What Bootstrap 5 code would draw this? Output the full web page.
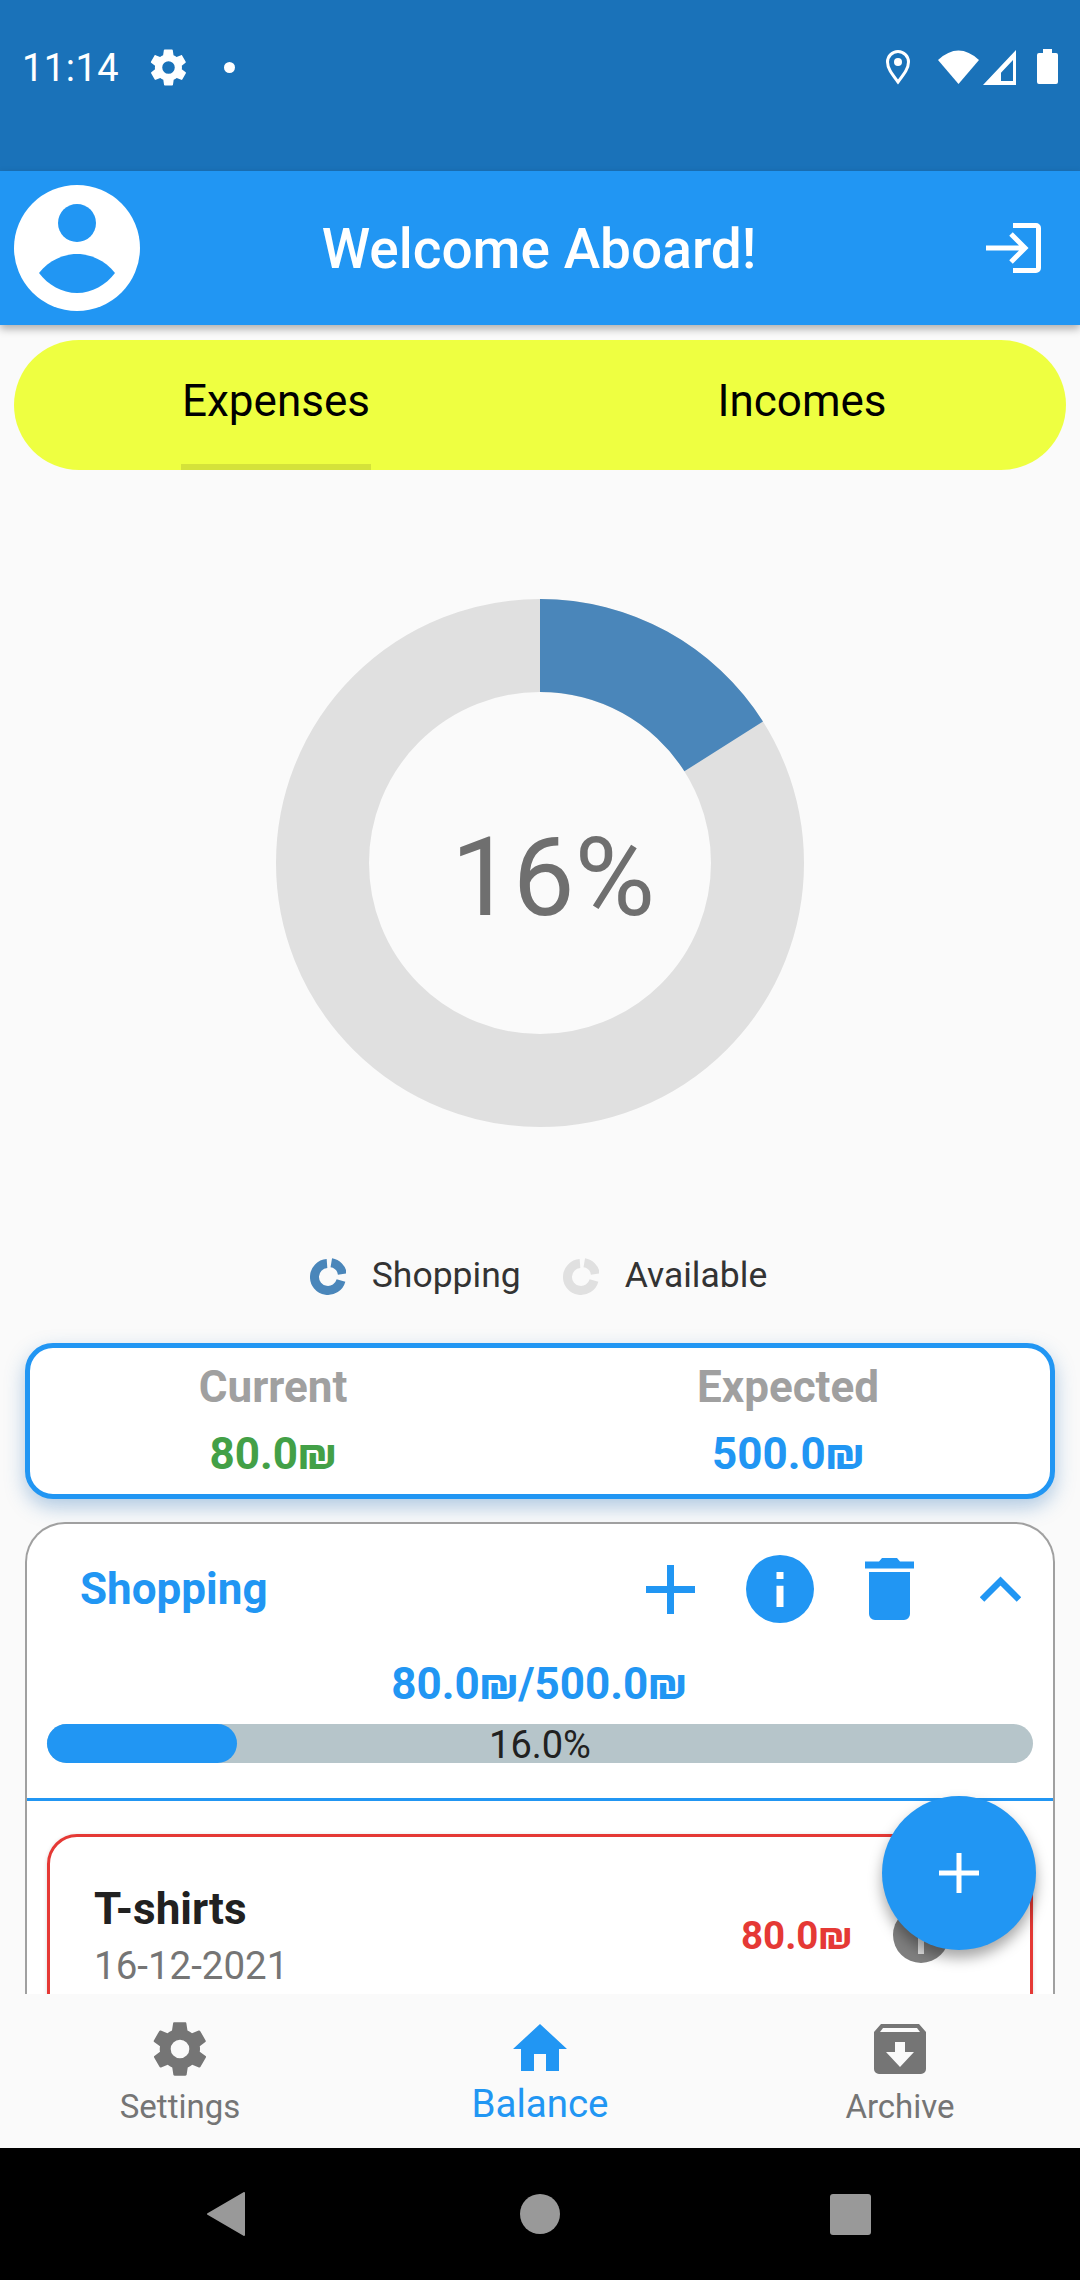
<!DOCTYPE html>
<html lang="en">

<head>
    <meta charset="UTF-8">
    <meta name="viewport" content="width=device-width, initial-scale=1.0">
    <title>Welcome Aboard</title>
    <link href="https://cdn.jsdelivr.net/npm/bootstrap@5.3.0/dist/css/bootstrap.min.css" rel="stylesheet">
    <style>
        body {
            background-color: #fafafa;
            font-family: Roboto, "Liberation Sans", sans-serif;
            width: 1080px;
            height: 2280px;
            overflow: hidden;
        }

        .app-shell { height: 2280px; position: relative; }

        .status-bar { height: 171px; background: #1a72b9; color: #fff; padding: 0 22px; }
        .status-row { height: 134px; }
        .status-time { font-size: 38px; letter-spacing: .5px; padding-top: 2px; }
        .status-gear { margin-left: 28px; }
        .status-dot { width: 11px; height: 11px; border-radius: 50%; background: #fff; margin-left: 34px; }

        .app-head { height: 154px; background: #2196f3; color: #fff; box-shadow: 0 4px 8px rgba(0, 0, 0, .3); padding: 0 39px 0 14px; z-index: 2; position: relative; }
        .head-title { font-size: 55px; font-weight: 500; line-height: 1; padding: 2px 48px 0 0; }

        .scroll-area { height: 1669px; overflow: hidden; }

        .tab-strip { height: 130px; margin: 15px 14px 0; background: #eeff41; border-radius: 65px; overflow: hidden; }
        .tab-item { font-size: 44px; color: #000; height: 130px; padding: 36px 2px 0 0; line-height: 50px; }
        .tab-word { display: inline-block; height: 94px; padding: 0 1px; border-bottom: 6px solid #d4e23a; }
        .tab-word-plain { display: inline-block; }

        .donut-box { width: 528px; height: 528px; margin: 129px auto 0; position: relative; }
        .donut-label { position: absolute; inset: 0; display: flex; align-items: center; justify-content: center; font-size: 110px; color: #6f6f6f; padding: 28px 0 0 26px; }

        .legend-row { margin-top: 127px; height: 44px; font-size: 35.5px; color: #333; padding-right: 3px; }
        .legend-gap { gap: 26px; }
        .legend-next { margin-left: 42px; }

        .total-box { margin: 45px 25px 0; height: 156px; background: #fff; border: 5px solid #2196f3; border-radius: 28px; box-shadow: 0 8px 20px rgba(33, 110, 180, .35); padding-top: 14px; }
        .total-left { padding-right: 24px; }
        .total-right { padding-right: 14px; }
        .total-head { font-size: 44px; font-weight: 700; color: #a0a0a0; line-height: 50px; }
        .total-value { font-size: 44px; font-weight: 700; line-height: 50px; margin-top: 17px; }
        .tone-green { color: #43a047; }
        .tone-blue { color: #2196f3; }

        .group-box { margin: 23px 25px 0; background: #fff; border: 2px solid #a0a0a0; border-bottom: 0; border-radius: 40px 40px 0 0; height: 600px; }
        .group-top { height: 130px; padding: 0 32px 0 53px; }
        .group-title { font-size: 44px; font-weight: 700; color: #2196f3; }
        .group-tools { gap: 51px; }
        .tool-chevron { margin-left: 15px; }
        .group-sum { font-size: 44px; font-weight: 700; color: #2196f3; text-align: center; line-height: 50px; margin-top: 5px; padding-right: 2px; }
        .bar-track { height: 39px; margin: 15px 20px 0; background: #b6c5ca; border-radius: 20px; position: relative; }
        .bar-fill { height: 100%; background: #2196f3; border-radius: 20px; }
        .bar-label { position: absolute; left: 0; right: 0; top: 0; text-align: center; font-size: 38px; line-height: 43px; color: #212121; }
        .group-rule { height: 3px; background: #2196f3; margin-top: 35px; }

        .entry-box { margin: 33px 20px 0; height: 300px; border: 3px solid #e53935; border-radius: 30px; box-shadow: 0 1px 4px rgba(0, 0, 0, .15); padding: 47px 81px 0 44px; }
        .entry-name { font-size: 44px; font-weight: 700; color: #212121; line-height: 50px; }
        .entry-date { font-size: 38.5px; color: #757575; line-height: 44px; margin-top: 10px; }
        .entry-price { font-size: 38.5px; font-weight: 700; color: #e53935; margin: 23px 41px 0 0; }
        .entry-info { width: 56px; height: 56px; margin-top: 23px; }

        .add-fab { position: absolute; left: 882px; top: 1796px; width: 154px; height: 154px; border-radius: 50%; background: #2196f3; border: 0; box-shadow: 0 8px 14px rgba(0, 0, 0, .35); z-index: 3; }

        .tab-foot { height: 154px; background: #fafafa; position: relative; z-index: 2; }
        .foot-item { color: #757575; font-size: 33px; line-height: 36px; width: 360px; padding-top: 30px; }
        .foot-settings { padding-top: 23px; }
        .foot-active { color: #2196f3; font-size: 38.5px; line-height: 42px; }
        .foot-gap-a { margin-top: 8px; }
        .foot-gap-b { margin-top: 12px; }
        .foot-gap-c { margin-top: 15px; }

        .sys-nav { height: 132px; background: #000; }
    </style>
</head>

<body>
    <main class="app-shell d-flex flex-column">
        <div class="status-bar">
            <div class="status-row d-flex align-items-center">
                <span class="status-time">11:14</span>
                <svg class="status-gear" width="43" height="43" viewBox="0 0 24 24" fill="#fff"><path d="M19.4 13c.1-.3.1-.7.1-1s0-.7-.1-1l2.1-1.6c.2-.1.2-.4.1-.6l-2-3.5c-.1-.2-.4-.3-.6-.2l-2.5 1c-.5-.4-1.1-.7-1.7-1l-.4-2.7c0-.2-.2-.4-.5-.4h-4c-.3 0-.5.2-.5.4l-.4 2.7c-.6.3-1.2.6-1.7 1l-2.5-1c-.2-.1-.5 0-.6.2l-2 3.5c-.1.2-.1.5.1.6L4.5 11c0 .3-.1.7-.1 1s0 .7.1 1l-2.1 1.6c-.2.1-.2.4-.1.6l2 3.5c.1.2.4.3.6.2l2.5-1c.5.4 1.1.7 1.7 1l.4 2.7c0 .2.2.4.5.4h4c.3 0 .5-.2.5-.4l.4-2.7c.6-.3 1.2-.6 1.7-1l2.5 1c.2.1.5 0 .6-.2l2-3.5c.1-.2.1-.5-.1-.6L19.4 13zM12 15.5a3.5 3.5 0 1 1 0-7 3.5 3.5 0 0 1 0 7z"/></svg>
                <span class="status-dot"></span>
                <svg class="ms-auto" width="173" height="36" viewBox="0 0 173 36" fill="#fff">
                    <path d="M13 33C7 25 2.500 19.500 2.500 13a10.500 10.500 0 0 1 21 0c0 6.500-4.500 12-10.500 20z" fill="none" stroke="#fff" stroke-width="3"/>
                    <circle cx="13" cy="13" r="4"/>
                    <path d="M53 11Q73.500-8 94 11L73.500 35z"/>
                    <path d="M98 36 131 1v35zM116 32h12V11L116 23.700z" fill-rule="evenodd"/>
                    <path d="M158 0h9v4h4a2 2 0 0 1 2 2v27a2 2 0 0 1-2 2h-17a2 2 0 0 1-2-2V6a2 2 0 0 1 2-2h4z"/>
                </svg>
            </div>
        </div>

        <header class="app-head d-flex align-items-center">
            <svg width="126" height="126" viewBox="0 0 126 126"><circle cx="63" cy="63" r="63" fill="#fff"/><circle cx="63" cy="38" r="19" fill="#2196f3"/><path d="M25 88C35 75 50 69 63 69s28 6 38 19C92 100 78 108 63 108S34 100 25 88z" fill="#2196f3"/></svg>
            <div class="head-title flex-grow-1 text-center">Welcome Aboard!</div>
            <svg width="55" height="50" viewBox="0 0 55 50" fill="none" stroke="#fff" stroke-width="5"><path d="M27 2.500h23a2.500 2.500 0 0 1 2.500 2.500v40a2.500 2.500 0 0 1-2.500 2.500H27"/><path d="M0 25h38M25 11l14 14-14 14"/></svg>
        </header>

        <section class="scroll-area">
            <div class="tab-strip row g-0 text-center">
                <div class="col-6 tab-item"><span class="tab-word">Expenses</span></div>
                <div class="col-6 tab-item"><span class="tab-word-plain">Incomes</span></div>
            </div>

            <div class="donut-box">
                <svg width="528" height="528" viewBox="0 0 528 528">
                    <circle cx="264" cy="264" r="217.500" fill="none" stroke="#e0e0e0" stroke-width="93"/>
                    <path d="M264 0A264 264 0 0 1 487 122.500L408.400 172.300A171 171 0 0 0 264 93z" fill="#4a86ba"/>
                </svg>
                <div class="donut-label">16%</div>
            </div>

            <div class="legend-row d-flex justify-content-center align-items-center">
                <span class="d-flex align-items-center legend-gap">
                    <svg width="36" height="37" viewBox="0 0 36 37" fill="none" stroke="#4a86ba" stroke-width="9"><path d="M17 5.500A13.500 13.500 0 1 0 31 22.500"/><path d="M21.300 4.700A13.500 13.500 0 0 1 32.400 16.100"/></svg>
                    <span>Shopping</span>
                </span>
                <span class="d-flex align-items-center legend-gap legend-next">
                    <svg width="36" height="37" viewBox="0 0 36 37" fill="none" stroke="#e0e0e0" stroke-width="9"><path d="M17 5.500A13.500 13.500 0 1 0 31 22.500"/><path d="M21.300 4.700A13.500 13.500 0 0 1 32.400 16.100"/></svg>
                    <span>Available</span>
                </span>
            </div>

            <div class="total-box row g-0 text-center">
                <div class="col-6 total-left">
                    <div class="total-head">Current</div>
                    <div class="total-value tone-green">80.0₪</div>
                </div>
                <div class="col-6 total-right">
                    <div class="total-head">Expected</div>
                    <div class="total-value tone-blue">500.0₪</div>
                </div>
            </div>

            <div class="group-box">
                <div class="group-top d-flex align-items-center justify-content-between">
                    <span class="group-title">Shopping</span>
                    <span class="d-flex align-items-center group-tools">
                        <svg width="49" height="49" viewBox="0 0 49 49" stroke="#2196f3" stroke-width="7"><path d="M24.500 0v49M0 24.500h49"/></svg>
                        <svg width="68" height="68" viewBox="0 0 68 68"><circle cx="34" cy="34" r="34" fill="#2196f3"/><path d="M30.500 30.700h7V52h-7zM30.500 17h7v7h-7z" fill="#fff"/></svg>
                        <svg width="49" height="63" viewBox="0 0 49 63" fill="#2196f3"><path d="M0 3.500h14l3-3.500h15l3 3.500h14v7H0zM4 14h41v42a6 6 0 0 1-6 6H10a6 6 0 0 1-6-6z"/></svg>
                        <svg class="tool-chevron" width="41" height="26" viewBox="0 0 41 26" fill="none" stroke="#2196f3" stroke-width="6.500"><path d="M2 23.500 20.500 5 39 23.500"/></svg>
                    </span>
                </div>
                <div class="group-sum">80.0₪/500.0₪</div>
                <div class="bar-track">
                    <div class="bar-fill" style="width: 19.3%"></div>
                    <div class="bar-label">16.0%</div>
                </div>
                <div class="group-rule"></div>
                <div class="entry-box d-flex justify-content-between">
                    <div>
                        <div class="entry-name">T-shirts</div>
                        <div class="entry-date">16-12-2021</div>
                    </div>
                    <div class="d-flex align-items-start">
                        <span class="entry-price">80.0₪</span>
                        <svg class="entry-info" viewBox="0 0 56 56"><circle cx="28" cy="28" r="28" fill="#7f7f7f"/><path d="M25 25h6v22h-6zM25 10h6v7h-6z" fill="#ddd"/></svg>
                    </div>
                </div>
            </div>
        </section>

        <button class="add-fab d-flex align-items-center justify-content-center" type="button" aria-label="Add">
            <svg width="40" height="40" viewBox="0 0 40 40" stroke="#fff" stroke-width="5"><path d="M20 0v40M0 20h40"/></svg>
        </button>

        <nav class="tab-foot d-flex justify-content-between">
            <div class="foot-item foot-settings d-flex flex-column align-items-center">
                <svg width="64" height="64" viewBox="0 0 24 24" fill="#757575"><path d="M19.4 13c.1-.3.1-.7.1-1s0-.7-.1-1l2.1-1.6c.2-.1.2-.4.1-.6l-2-3.500c-.1-.2-.4-.3-.6-.2l-2.500 1c-.5-.4-1.100-.7-1.700-1l-.4-2.700c0-.2-.2-.4-.5-.4h-4c-.3 0-.5.2-.5.4l-.4 2.700c-.6.3-1.200.6-1.700 1l-2.500-1c-.2-.1-.5 0-.6.2l-2 3.500c-.1.2-.1.5.1.6L4.500 11c0 .3-.1.7-.1 1s0 .7.1 1l-2.100 1.600c-.2.1-.2.4-.1.6l2 3.500c.1.2.4.3.6.2l2.500-1c.5.4 1.100.7 1.700 1l.4 2.700c0 .2.2.4.5.4h4c.3 0 .5-.2.5-.4l.4-2.700c.6-.3 1.200-.6 1.700-1l2.500 1c.2.1.5 0 .6-.2l2-3.500c.1-.2.1-.5-.1-.6L19.400 13zM12 15.500a3.500 3.500 0 1 1 0-7 3.500 3.500 0 0 1 0 7z"/></svg>
                <span class="foot-gap-a">Settings</span>
            </div>
            <div class="foot-item foot-active d-flex flex-column align-items-center">
                <svg width="54" height="47" viewBox="0 0 54 47" fill="#2196f3"><path d="M27 0 54 25h-8v22H33V30H21v17H8V25H0z"/></svg>
                <span class="foot-gap-b">Balance</span>
            </div>
            <div class="foot-item d-flex flex-column align-items-center">
                <svg width="52" height="50" viewBox="0 0 52 50" fill="#757575"><path d="M7 0h38l7 8v37a5 5 0 0 1-5 5H5a5 5 0 0 1-5-5V8zM9 4 6 8h40l-3-4zM21 18v10h-9l14 15 14-15h-9V18z" fill-rule="evenodd"/></svg>
                <span class="foot-gap-c">Archive</span>
            </div>
        </nav>

        <div class="sys-nav d-flex align-items-center justify-content-center">
            <svg width="1080" height="44" viewBox="0 0 1080 44" fill="#999"><path d="M208 22 244 1v42z" stroke="#999" stroke-width="2" stroke-linejoin="round"/><circle cx="540" cy="22" r="20"/><rect x="830" y="2" width="41" height="41" rx="3"/></svg>
        </div>
    </main>
    <script src="https://cdn.jsdelivr.net/npm/bootstrap@5.3.0/dist/js/bootstrap.bundle.min.js"></script>
</body>

</html>
